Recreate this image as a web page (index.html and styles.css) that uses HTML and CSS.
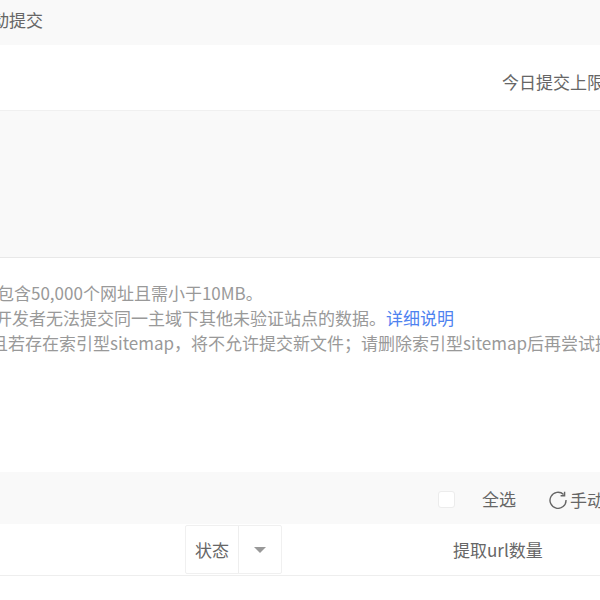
FILE: index.html
```html
<!DOCTYPE html>
<html lang="zh-CN">
<head>
<meta charset="utf-8">
<title>自动提交</title>
<link rel="stylesheet" href="styles.css">
</head>
<body>
<div class="page">
  <header class="title-bar"><span class="title">动提交</span></header>
  <section class="quota-row"><span class="quota">今日提交上限</span></section>
  <section class="input-area"></section>
  <section class="notes">
    <p class="note note-a">包含50,000个网址且需小于10MB。</p>
    <p class="note note-b">开发者无法提交同一主域下其他未验证站点的数据。<a class="link" href="#">详细说明</a></p>
    <p class="note note-c">且若存在索引型sitemap，将不允许提交新文件；请删除索引型sitemap后再尝试提交</p>
  </section>
  <section class="toolbar">
    <span class="checkbox"></span>
    <span class="select-all">全选</span>
    <span class="refresh">
      <svg class="refresh-icon" width="18" height="18" viewBox="0 0 18 18" fill="none">
        <path d="M14.6 3.6A8 8 0 1 0 17 9" stroke="#666" stroke-width="1.4"/>
        <path d="M15.6 0.8V4.8H11.6" stroke="#666" stroke-width="1.4"/>
      </svg>
      手动提取
    </span>
  </section>
  <section class="table-head">
    <div class="status-select">
      <span class="status-label">状态</span>
      <span class="status-arrow"><i class="caret"></i></span>
    </div>
    <span class="url-count">提取url数量</span>
  </section>
</div>
</body>
</html>
```
FILE: styles.css
```css
* { box-sizing: border-box; }
html, body { margin: 0; padding: 0; height: 100%; overflow: hidden; background: #fff; }
body {
  font-family: "Noto Sans CJK SC", "Noto Sans", sans-serif;
  font-size: 17px;
  color: #666;
}
.page { width: 600px; height: 600px; overflow: hidden; white-space: nowrap; }
.title-bar { height: 45px; background: #f9f9f9; display: flex; align-items: center; }
.title { margin-left: -8px; line-height: 24px; margin-top: -6px; }
.quota-row { height: 65px; display: flex; align-items: center; padding-left: 502px; }
.quota { line-height: 24px; margin-top: 9px; }
.input-area { height: 148px; background: #f9f9f9; border-top: 1px solid #f0f0f0; border-bottom: 1px solid #e8e8e8; }
.notes { height: 214px; padding-top: 22px; color: #999; }
.note { margin: 0; height: 25px; line-height: 25px; }
.note-a { margin-left: -3px; }
.note-b { margin-left: -5px; }
.note-c { margin-left: -9px; }
.link { color: #4e82f0; text-decoration: none; }
.toolbar { height: 52px; background: #f9f9f9; display: flex; align-items: center; padding: 3px 0 0 438px; }
.checkbox { flex: none; width: 17px; height: 17px; background: #fff; border: 1px solid #ececec; border-radius: 3px; }
.select-all { margin-left: 27px; line-height: 24px; margin-top: -1px; }
.refresh { margin-left: 33px; display: flex; align-items: center; gap: 3px; line-height: 24px; }
.refresh-icon { flex: none; }
.table-head { height: 52px; border-bottom: 1px solid #eee; display: flex; align-items: center; padding-left: 185px; }
.status-select { flex: none; width: 97px; height: 49px; display: flex; border: 1px solid #f0f0f0; border-radius: 2px; background: #fff; }
.status-label { width: 53px; padding-left: 9px; line-height: 47px; border-right: 1px solid #eee; }
.status-arrow { flex: 1; display: flex; align-items: center; justify-content: center; }
.caret { width: 0; height: 0; border-left: 6px solid transparent; border-right: 6px solid transparent; border-top: 6px solid #999; }
.url-count { margin-left: 171px; line-height: 24px; }
```
